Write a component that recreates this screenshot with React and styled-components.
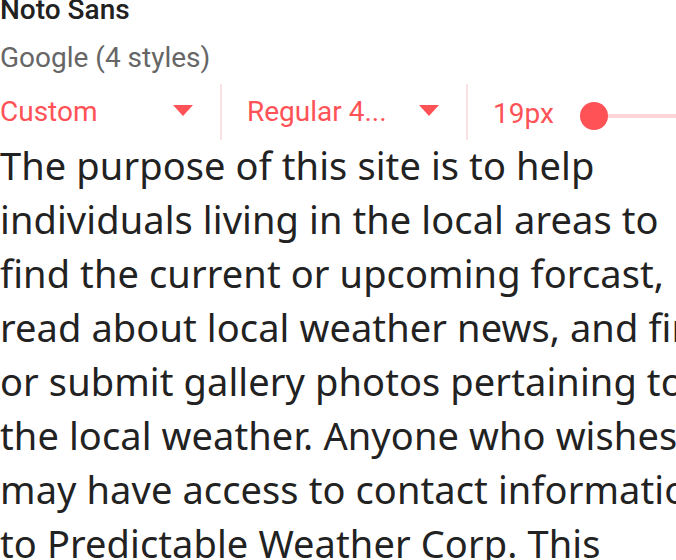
import React from 'react';
import styled, { createGlobalStyle } from 'styled-components';

const GlobalStyle = createGlobalStyle`
    html, body {
        margin: 0;
        padding: 0;
        background: #fff;
        overflow: hidden;
    }
`;

const Viewport = styled.div`
    width: 676px;
    height: 560px;
    overflow: hidden;
`;

const Card = styled.section`
    width: 725px;
    margin-top: -8px;
    font-family: Roboto, 'Liberation Sans', sans-serif;
`;

const Title = styled.h2`
    margin: 0;
    font-size: 28px;
    font-weight: 500;
    line-height: 36px;
    color: #212121;
`;

const Foundry = styled.div`
    margin-top: 12px;
    font-size: 28px;
    line-height: 36px;
    color: #666;
`;

const Controls = styled.div`
    display: flex;
    align-items: center;
    height: 56px;
    margin-top: 8px;
    color: #ff5257;
    font-size: 28px;
    line-height: 32px;
`;

const Select = styled.div`
    display: flex;
    align-items: center;
    justify-content: space-between;
    box-sizing: border-box;
    width: ${(p) => p.width}px;
    height: 100%;
    padding-left: ${(p) => p.pad}px;
    padding-right: 27px;
    border-right: 2px solid #fde2e4;
`;

const Arrow = styled.span`
    width: 0;
    height: 0;
    margin-top: -3px;
    border-left: 10.5px solid transparent;
    border-right: 10.5px solid transparent;
    border-top: 11px solid #ff5257;
`;

const SizeControl = styled.div`
    display: flex;
    align-items: center;
    padding-left: 25px;
    flex: 1;
`;

const SizeLabel = styled.span`
    width: 87px;
    margin-top: 4px;
`;

const Track = styled.div`
    position: relative;
    flex: 1;
    height: 4px;
    margin-top: 8px;
    background: #fdd5d7;
`;

const Thumb = styled.span`
    position: absolute;
    left: 0;
    top: 50%;
    width: 28px;
    height: 28px;
    border-radius: 50%;
    background: #ff5257;
    transform: translateY(-50%);
`;

const Sample = styled.p`
    margin: -2px 0 0;
    font-family: 'Noto Sans', sans-serif;
    font-size: 38px;
    letter-spacing: 0.1px;
    line-height: 54px;
    color: #222;
`;

export default function App() {
    return (
        <Viewport>
            <GlobalStyle />
            <Card>
                <Title>Noto Sans</Title>
                <Foundry>Google (4 styles)</Foundry>
                <Controls>
                    <Select width={222} pad={0}>
                        <span>Custom</span>
                        <Arrow />
                    </Select>
                    <Select width={246} pad={25}>
                        <span>Regular 4...</span>
                        <Arrow />
                    </Select>
                    <SizeControl>
                        <SizeLabel>19px</SizeLabel>
                        <Track>
                            <Thumb />
                        </Track>
                    </SizeControl>
                </Controls>
                <Sample>
                    The purpose of this site is to help individuals living in the local areas to
                    find the current or upcoming forcast, read about local weather news, and find
                    or submit gallery photos pertaining to the local weather. Anyone who wishes
                    may have access to contact information to Predictable Weather Corp. This
                    website is maintained daily.
                </Sample>
            </Card>
        </Viewport>
    );
}
